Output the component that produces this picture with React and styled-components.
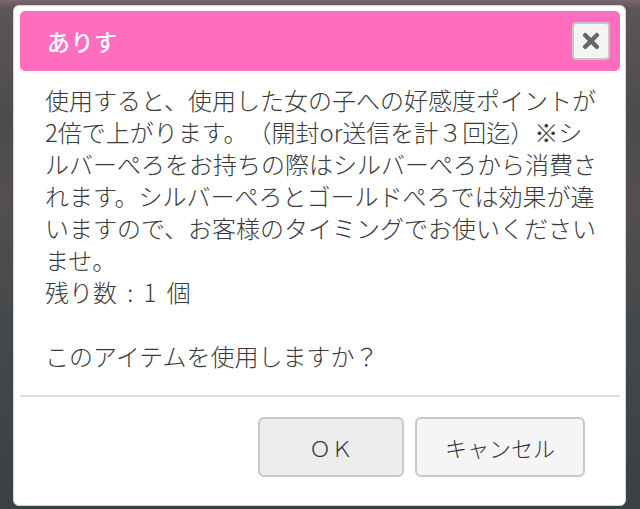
import styled, { createGlobalStyle } from "styled-components";
import { FaTimes } from "react-icons/fa";

const GlobalStyle = createGlobalStyle`
  html, body {
    margin: 0;
    padding: 0;
  }
  body {
    width: 640px;
    height: 509px;
    overflow: hidden;
    font-family: "Noto Sans CJK JP", "Noto Sans", sans-serif;
    text-spacing-trim: space-all;
    background:
      linear-gradient(180deg, #7a6670 0px, #5d5558 8px, #4c4b4e 120px, #534f4e 200px, #44484b 330px, #3b4043 509px);
  }
`;

const Backdrop = styled.div`
  padding: 5px 14px 3px 13px;
`;

const Dialog = styled.div`
  box-sizing: border-box;
  width: 613px;
  height: 501px;
  display: flex;
  flex-direction: column;
  background: #fff;
  border: 1px solid #d6d6d6;
  border-radius: 6px;
  padding: 5px 5px 0 6px;
`;

const Header = styled.div`
  height: 60px;
  display: flex;
  align-items: center;
  justify-content: space-between;
  background: #ff6dbf;
  border-radius: 5px;
  padding: 0 10px 0 27px;
`;

const Title = styled.h1`
  margin: 0;
  color: #fff;
  font-size: 23px;
  font-weight: 500;
  letter-spacing: 0.5px;
`;

const CloseButton = styled.button`
  box-sizing: border-box;
  width: 38px;
  height: 38px;
  display: flex;
  align-items: center;
  justify-content: center;
  padding: 0;
  background: #f4f4f4;
  border: 2px solid #c6c6c6;
  border-radius: 4px;
  color: #676767;
  font-size: 24px;
`;

const Body = styled.div`
  padding: 13px 0 0 25px;
  color: #3a3a3a;
  font-size: 24px;
  font-weight: 300;
  line-height: 32px;
  white-space: nowrap;
`;

const Paragraph = styled.p`
  margin: 0;
  word-spacing: ${(p) => p.$spread || 0}px;
`;

const Divider = styled.hr`
  margin: 23px 0 0;
  border: none;
  height: 2px;
  background: #dcdcdc;
`;

const Footer = styled.div`
  display: flex;
  justify-content: flex-end;
  gap: 11px;
  padding: 20px 35px 0 0;
`;

const Button = styled.button`
  box-sizing: border-box;
  width: ${(p) => p.$w}px;
  height: 60px;
  background: ${(p) => (p.$primary ? "#ececec" : "#f5f5f5")};
  border: 2px solid #c8c8c8;
  border-radius: 6px;
  color: #333;
  font-family: "Noto Sans CJK JP", "Noto Sans", sans-serif;
  font-size: 22px;
  font-weight: 300;
  padding: 0;
`;

const description = [
  "使用すると、使用した女の子への好感度ポイントが",
  "2倍で上がります。（開封or送信を計３回迄）※シ",
  "ルバーぺろをお持ちの際はシルバーぺろから消費さ",
  "れます。シルバーぺろとゴールドぺろでは効果が違",
  "いますので、お客様のタイミングでお使いください",
  "ませ。",
];

export default function App() {
  return (
    <>
      <GlobalStyle />
      <Backdrop>
        <Dialog>
          <Header>
            <Title>ありす</Title>
            <CloseButton aria-label="閉じる">
              <FaTimes />
            </CloseButton>
          </Header>
          <Body>
            <Paragraph>
              {description.map((line, i) => (
                <span key={i}>
                  {line}
                  <br />
                </span>
              ))}
            </Paragraph>
            <Paragraph $spread={5}>残り数 : 1 個</Paragraph>
            <Paragraph>&nbsp;</Paragraph>
            <Paragraph>このアイテムを使用しますか？</Paragraph>
          </Body>
          <Divider />
          <Footer>
            <Button $primary $w={146}>ＯＫ</Button>
            <Button $w={170}>キャンセル</Button>
          </Footer>
        </Dialog>
      </Backdrop>
    </>
  );
}
